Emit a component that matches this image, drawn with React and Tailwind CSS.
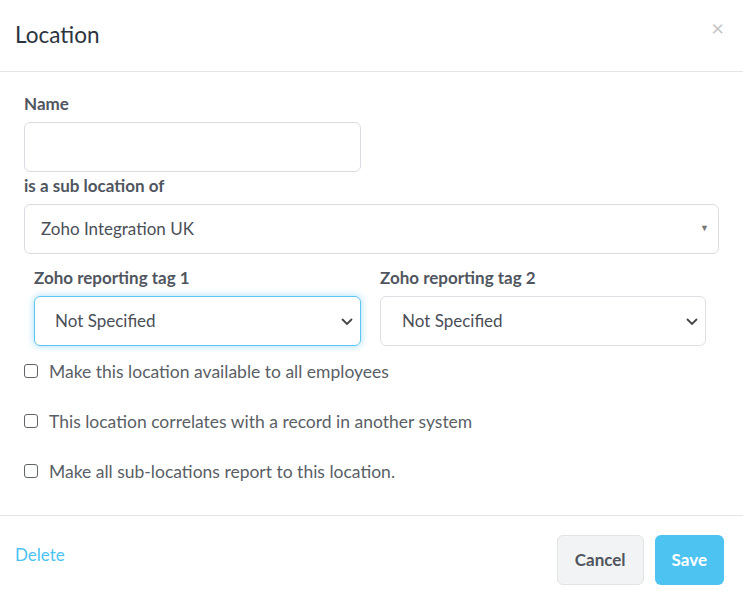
import {useState} from "react";

const Check = ({label}) => {
    const [checked, setChecked] = useState(false);
    return (
        <label className="flex items-center h-[20px] gap-[11px] cursor-pointer">
            <input type="checkbox" checked={checked} onChange={() => setChecked(!checked)}
                   className="appearance-none w-[14px] h-[14px] border border-[#5f6368] rounded-[3px] bg-white -mt-[3px]"/>
            <span className="text-[17.5px] text-[#5a5f66]">{label}</span>
        </label>
    )
}

const Chevron = () => (
    <svg width="12" height="8" viewBox="0 0 12 8" className="absolute right-[7px] top-[21px]">
        <path d="M1.5 1.5 L6 6 L10.5 1.5" fill="none" stroke="#444" strokeWidth="1.8" strokeLinecap="round"/>
    </svg>
)

const App = () => {
    const [name, setName] = useState("");

    return (
        <div className="w-[743px] h-[603px] bg-white font-['Lato',sans-serif] text-[#4a4f57] flex flex-col">
            {/*Header*/}
            <div className="h-[72px] border-b border-[#e5e5e5] flex items-start justify-between px-[15px]">
                <h1 className="text-[22.5px] text-[#2c3440] mt-[20px] leading-[30px]">Location</h1>
                <button className="text-[#c4c4c4] text-[22px] leading-none mt-[17px] mr-[4px]">×</button>
            </div>

            {/*Body*/}
            <div className="px-[24px] pt-[22px] flex-1">
                <p className="text-[17px] font-bold text-[#505660] leading-[20px]">Name</p>
                <input type="text" value={name} onChange={(e) => setName(e.target.value)}
                       className="mt-[8px] w-[337px] h-[50px] border border-[#d9dde3] rounded-[6px] px-3 outline-none"/>
                <p className="text-[17px] font-bold text-[#505660] leading-[20px] mt-[4px]">is a sub location of</p>
                <div className="relative mt-[8px] h-[50px] border border-[#d9dde3] rounded-[6px] flex items-center pl-[16px]">
                    <span className="text-[17px] text-[#4a4f57]">Zoho Integration UK</span>
                    <span className="absolute right-[9px] top-[16px] text-[9px] text-[#777]">▼</span>
                </div>

                <div className="flex gap-[19px] px-[10px] mt-[14px]">
                    <div className="w-[327px]">
                        <p className="text-[17px] font-bold text-[#505660] leading-[20px]">Zoho reporting tag 1</p>
                        <div className="relative mt-[8px] h-[50px] border border-[#5ec4f2] rounded-[6px] flex items-center pl-[20px] shadow-[0_0_6px_1px_rgba(94,196,242,0.45)]">
                            <span className="text-[17px] text-[#4a4f57]">Not Specified</span>
                            <Chevron/>
                        </div>
                    </div>
                    <div className="w-[326px]">
                        <p className="text-[17px] font-bold text-[#505660] leading-[20px]">Zoho reporting tag 2</p>
                        <div className="relative mt-[8px] h-[50px] border border-[#dde0e5] rounded-[6px] flex items-center pl-[21px]">
                            <span className="text-[17px] text-[#4a4f57]">Not Specified</span>
                            <Chevron/>
                        </div>
                    </div>
                </div>

                <div className="flex flex-col gap-[30px] mt-[16px]">
                    <Check label="Make this location available to all employees"/>
                    <Check label="This location correlates with a record in another system"/>
                    <Check label="Make all sub-locations report to this location."/>
                </div>
            </div>

            {/*Footer*/}
            <div className="h-[88px] border-t border-[#e5e5e5] flex items-start justify-between pl-[15px] pr-[19px]">
                <a href="#" className="text-[17px] text-[#4cc4f2] mt-[26px]">Delete</a>
                <div className="flex gap-[11px] mt-[19px]">
                    <button className="h-[50px] px-[17px] bg-[#f2f3f5] border border-[#e1e3e7] rounded-[6px] text-[17px] font-bold text-[#4f555d]">Cancel</button>
                    <button className="h-[50px] px-[17px] bg-[#4dc3f2] rounded-[6px] text-[17px] font-bold text-white">Save</button>
                </div>
            </div>
        </div>
    )
}

export default App;
